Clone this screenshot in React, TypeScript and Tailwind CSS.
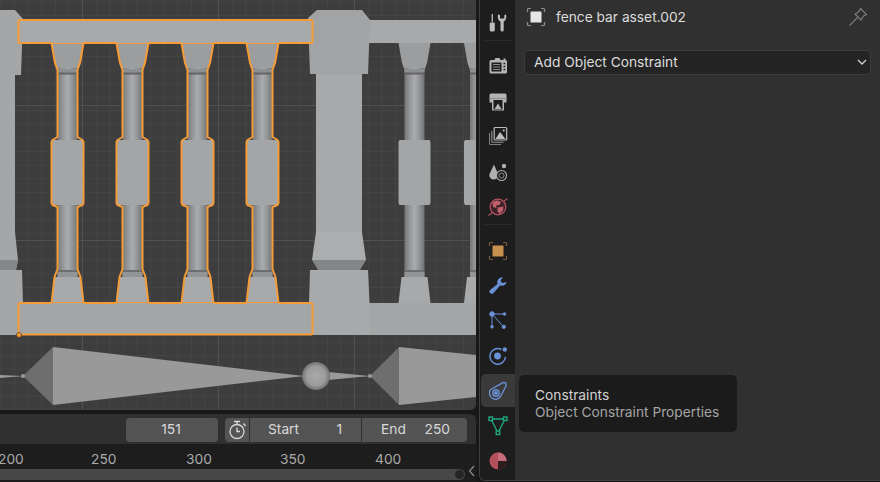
import type { ReactNode } from "react";

const FONT = "font-['Inter','Liberation_Sans',sans-serif]";
const ORANGE = "#f59b38";

function Baluster({ cx, selected }: { cx: number; selected: boolean }) {
  const outline = `M${cx - 16} 43 L${cx - 12.5} 63 L${cx - 10} 70 L${cx - 10} 137 L${cx - 15} 140 L${cx - 16} 142 L${cx - 16} 203 L${cx - 15} 205 L${cx - 10} 207 L${cx - 10} 269 L${cx - 13} 277 L${cx - 16} 303 L${cx + 16} 303 L${cx + 13} 277 L${cx + 10} 269 L${cx + 10} 207 L${cx + 15} 205 L${cx + 16} 203 L${cx + 16} 142 L${cx + 15} 140 L${cx + 10} 137 L${cx + 10} 70 L${cx + 12.5} 63 L${cx + 16} 43 Z`;
  return (
    <g>
      <path d={`M${cx - 16} 43 L${cx - 12.5} 63 L${cx - 10} 70 L${cx + 10} 70 L${cx + 12.5} 63 L${cx + 16} 43 Z`} fill="#9c9d9e" />
      <rect x={cx - 10} y="68" width="20" height="210" fill="url(#column)" />
      <rect x={cx - 10} y="69" width="20" height="3.5" fill="#8e8f90" />
      <rect x={cx - 10} y="72.5" width="20" height="2" fill="#626364" />
      <rect x={cx - 10} y="270" width="20" height="2" fill="#6c6d6e" />
      <rect x={cx - 10} y="272" width="20" height="5" fill="#939495" />
      <path d={`M${cx - 15} 140 L${cx - 16} 142 L${cx - 16} 203 L${cx - 15} 205 L${cx + 15} 205 L${cx + 16} 203 L${cx + 16} 142 L${cx + 15} 140 Z`} fill="#a4a5a6" />
      <path d={`M${cx - 13} 277 L${cx - 16} 303 L${cx + 16} 303 L${cx + 13} 277 Z`} fill="#a8a9aa" />
      {selected && <path d={outline} fill="none" stroke={ORANGE} strokeWidth="2" strokeLinejoin="round" />}
    </g>
  );
}

function Viewport() {
  return (
    <svg viewBox="0 0 476 410" className="block h-[410px] w-[476px] rounded-br-md">
      <defs>
        <pattern id="minor" x="0.5" y="1.5" width="13.6" height="13.6" patternUnits="userSpaceOnUse">
          <path d="M13.6 0H0V13.6" fill="none" stroke="#4a4a4a" strokeWidth="1" />
        </pattern>
        <linearGradient id="column" x1="0" x2="1" y1="0" y2="0">
          <stop offset="0" stopColor="#767778" />
          <stop offset="0.25" stopColor="#949596" />
          <stop offset="0.5" stopColor="#aaabac" />
          <stop offset="0.75" stopColor="#929394" />
          <stop offset="1" stopColor="#6f7071" />
        </linearGradient>
        <radialGradient id="ball" cx="0.5" cy="0.5" r="0.5">
          <stop offset="0" stopColor="#aaaaaa" />
          <stop offset="0.7" stopColor="#9a9a9a" />
          <stop offset="1" stopColor="#707070" />
        </radialGradient>
      </defs>
      <rect width="476" height="410" fill="#3d3d3d" />
      <rect width="476" height="410" fill="url(#minor)" />
      <path d="M82.5 0V410M218.5 0V410M354.5 0V410M0 105.5H476M0 240.5H476M0 376.5H476" stroke="#515151" strokeWidth="1" />

      {/* left post */}
      <path d="M0 10H15L23 19L21 75H15V232L18 260L16 270H22L24 335H0Z" fill="#a5a6a7" />
      <path d="M0 260H18L16 270H0Z" fill="#858687" />

      {/* right rail and balusters behind */}
      <rect x="366" y="20" width="110" height="23" fill="#a8a9aa" />
      <rect x="366" y="303" width="110" height="32" fill="#a4a5a6" />
      <Baluster cx={414.5} selected={false} />
      <Baluster cx={480} selected={false} />

      {/* right post */}
      <path d="M308 18L317 10H362L370 20L368 74H310Z" fill="#a2a3a4" />
      <rect x="316" y="74" width="46" height="158" fill="#a8a9aa" />
      <path d="M316 232H362L366 260H312Z" fill="#acadae" />
      <path d="M312 260H366L360 270H318Z" fill="#848586" />
      <path d="M310 270H368L371 335H308Z" fill="#a8a9aa" />

      {/* selected section */}
      <Baluster cx={67.5} selected />
      <Baluster cx={132.5} selected />
      <Baluster cx={197.5} selected />
      <Baluster cx={262.5} selected />
      <rect x="19" y="20" width="293" height="23" rx="2" fill="#a8a9aa" />
      <rect x="19" y="303" width="293" height="32" rx="2" fill="#a4a5a6" />
      <path d="M20 43A1.5 1.5 0 0 1 18.5 41.5V21.5A1.5 1.5 0 0 1 20 20H311A1.5 1.5 0 0 1 312.5 21.5V41.5A1.5 1.5 0 0 1 311 43H278.5M246.5 43H213.5M181.5 43H148.5M116.5 43H83.5M51.5 43H20" fill="none" stroke={ORANGE} strokeWidth="2" />
      <path d="M51.5 303H20A1.5 1.5 0 0 0 18.5 304.5V334.5H311A1.5 1.5 0 0 0 312.5 333V304.5A1.5 1.5 0 0 0 311 303H278.5M246.5 303H213.5M181.5 303H148.5M116.5 303H83.5" fill="none" stroke={ORANGE} strokeWidth="2" />
      <circle cx="19" cy="335" r="2.5" fill={ORANGE} stroke="#4a3320" strokeWidth="0.7" />

      {/* lower row */}
      <path d="M0 375L23 376L0 378Z" fill="#999" />
      <path d="M23 376L53 347V405Z" fill="#6e6e6e" />
      <path d="M53 347L304 376L53 405Z" fill="#999" />
      <path d="M328 372L370 376L328 380Z" fill="#999" />
      <circle cx="316" cy="376" r="14" fill="url(#ball)" />
      <path d="M370 376L399 347V405Z" fill="#6e6e6e" />
      <path d="M399 347L476 355V397L399 405Z" fill="#999" />
      <circle cx="23" cy="376" r="2" fill="#9a9a9a" />
      <circle cx="370" cy="376" r="2" fill="#9a9a9a" />
    </svg>
  );
}

function Timeline() {
  return (
    <div className="flex h-[68px] w-[476px] flex-col overflow-hidden rounded-tr-md text-[13.75px]">
      <div className="flex h-[30px] items-center bg-[#303030] pl-[126px] pt-[1px]">
        <div className="flex h-[24px] w-[92px] items-center justify-center rounded-[4px] bg-[#545454] pr-[2px] text-[#d8d8d8]">151</div>
        <div className="ml-[7px] flex h-[24px] w-[25px] items-center justify-center rounded-l-[4px] border-r border-[#303030] bg-[#545454]">
          <svg viewBox="0 0 20 20" className="h-[20px] w-[20px]" fill="none" stroke="#d8d8d8" strokeWidth="1.3">
            <circle cx="10" cy="11.5" r="7" />
            <path d="M7 1.5H13M10 1.5V4.5M16.5 3.5L18.5 6M10 7.5V11.5H13" />
          </svg>
        </div>
        <div className="flex h-[24px] w-[112px] items-center justify-between border-r border-[#303030] bg-[#545454] pl-[18px] pr-[19px] text-[#d8d8d8]">
          <span>Start</span>
          <span>1</span>
        </div>
        <div className="flex h-[24px] w-[105px] items-center justify-between rounded-r-[4px] bg-[#545454] pl-[19px] pr-[17px] text-[#d8d8d8]">
          <span>End</span>
          <span>250</span>
        </div>
      </div>
      <div className="relative flex-1 bg-[#1d1d1d]">
        <div className="relative h-[25px] text-[#a9a9a9]">
          <span className="absolute left-[-2px] top-[5px]">200</span>
          <span className="absolute left-[91px] top-[5px]">250</span>
          <span className="absolute left-[186px] top-[5px]">300</span>
          <span className="absolute left-[280px] top-[5px]">350</span>
          <span className="absolute left-[375px] top-[5px]">400</span>
        </div>
        <div className="flex h-[11px] w-[465px] items-center justify-end rounded-r-full bg-[#474747] pr-[1px]">
          <div className="h-[9px] w-[9px] rounded-full bg-[#262626]" />
        </div>
        <svg viewBox="0 0 8 12" className="absolute left-[468px] top-[21px] h-[12px] w-[8px]" fill="none" stroke="#8a8a8a" strokeWidth="1.2">
          <path d="M6 1L1.5 6L6 11" />
        </svg>
      </div>
    </div>
  );
}

function ToolIcon() {
  return (
    <svg viewBox="0 0 20 20" className="h-[20px] w-[20px]" fill="#bdbdbd">
      <rect x="3.6" y="1" width="1.3" height="8" />
      <path d="M1.7 10.5A1 1 0 0 1 2.7 9.5H5.8A1 1 0 0 1 6.8 10.5V17A1.5 1.5 0 0 1 5.3 18.5H3.2A1.5 1.5 0 0 1 1.7 17Z" />
      <path d="M10 1.2C9.3 4.5 10 7.5 12.5 8.5V17A1.6 1.6 0 0 0 15.7 17V8.5C18 7.5 18.8 4.5 18 1.2L16.3 2.2V5.5H12V2.2Z" />
    </svg>
  );
}

function RenderIcon() {
  return (
    <svg viewBox="0 0 20 20" className="h-[20px] w-[20px]">
      <path d="M3 4H6.5L7.5 2H11.5L12.5 4H15.5V2.5H17.5V4A1.5 1.5 0 0 1 19 5.5V16A1.5 1.5 0 0 1 17.5 17.5H3A1.5 1.5 0 0 1 1.5 16V5.5A1.5 1.5 0 0 1 3 4Z" fill="#b4b4b4" />
      <rect x="3.5" y="6.5" width="10" height="9" fill="#1d1d1d" />
      <path d="M5 8.5H12M5 11H12M5 13.5H12" stroke="#8f8f8f" strokeWidth="1.2" />
      <path d="M15.5 7.5H17.2M15.5 10.5H17.2M15.5 13.5H17.2" stroke="#1d1d1d" strokeWidth="1.6" />
    </svg>
  );
}

function OutputIcon() {
  return (
    <svg viewBox="0 0 20 20" className="h-[20px] w-[20px]">
      <path d="M1.5 3A1.5 1.5 0 0 1 3 1.5H17A1.5 1.5 0 0 1 18.5 3V10.5H16V18.5H4V10.5H1.5Z" fill="#b4b4b4" />
      <rect x="1.5" y="6" width="17" height="1" fill="#8d8d8d" />
      <rect x="5.5" y="8" width="9" height="9.5" fill="#1d1d1d" />
      <path d="M6.5 17L10 11.5L13.5 17Z" fill="#b4b4b4" />
    </svg>
  );
}

function ViewLayerIcon() {
  return (
    <svg viewBox="0 0 20 20" className="h-[20px] w-[20px]">
      <path d="M1.5 7V17.5A1 1 0 0 0 2.5 18.5H13" fill="none" stroke="#7d7d7d" strokeWidth="1.1" />
      <path d="M3.8 5V15.2A1 1 0 0 0 4.8 16.2H15.5" fill="none" stroke="#999" strokeWidth="1.1" />
      <rect x="6.2" y="1.5" width="12.5" height="12.5" rx="1" fill="#1d1d1d" stroke="#bdbdbd" strokeWidth="1.2" />
      <path d="M7.5 13L12 6L17.5 13Z" fill="#bdbdbd" />
      <circle cx="15.8" cy="4.5" r="1.1" fill="#bdbdbd" />
    </svg>
  );
}

function SceneIcon() {
  return (
    <svg viewBox="0 0 20 20" className="h-[20px] w-[20px]">
      <path d="M6 2.5L10 12A4.4 4.4 0 0 1 6 17.5A4.4 4.4 0 0 1 1.5 12Z" fill="#b0b0b0" />
      <circle cx="16" cy="4" r="2.2" fill="#b0b0b0" />
      <circle cx="13.5" cy="13.5" r="5" fill="#1d1d1d" stroke="#b0b0b0" strokeWidth="1.1" />
      <circle cx="13.5" cy="13.5" r="2.5" fill="none" stroke="#8a8a8a" strokeWidth="1" />
    </svg>
  );
}

function WorldIcon() {
  return (
    <svg viewBox="0 0 20 20" className="h-[20px] w-[20px]">
      <circle cx="10" cy="10" r="7.8" fill="#3a2227" stroke="#b1515e" strokeWidth="1.3" />
      <path d="M4.5 5.5L9 3.2L13 5L11.5 8L8 8.5L8.5 11L5 10Z M9.5 10.5L15.5 9.5L15 13.5L11.5 17L9.5 14Z" fill="#c2616e" />
      <path d="M0.5 18.5L4.5 15.5M15.5 4.5L19.5 1.5" stroke="#b1515e" strokeWidth="1.2" />
    </svg>
  );
}

function ObjectIcon() {
  return (
    <svg viewBox="0 0 20 20" className="h-[20px] w-[20px]">
      <path d="M1.5 5V2.5A1 1 0 0 1 2.5 1.5H5M15 1.5H17.5A1 1 0 0 1 18.5 2.5V5M18.5 15V17.5A1 1 0 0 1 17.5 18.5H15M5 18.5H2.5A1 1 0 0 1 1.5 17.5V15" fill="none" stroke="#7a5a3e" strokeWidth="1.2" />
      <rect x="4.5" y="4.5" width="11" height="11" rx="0.5" fill="#c9914f" />
    </svg>
  );
}

function ModifierIcon() {
  return (
    <svg viewBox="0 0 20 20" className="h-[20px] w-[20px]">
      <path d="M18.5 5.5C18.5 9 15 10.5 12 9.5L6 16.5C4.5 19 0.5 17.5 1.5 14.5L9.5 8C8.5 4.5 11 1 15 1.3L12.5 4.5L14 7L17 6.5Z" fill="#6a90d6" />
    </svg>
  );
}

function ParticleIcon() {
  return (
    <svg viewBox="0 0 20 20" className="h-[20px] w-[20px]" fill="#6a90d6" stroke="#6a90d6">
      <path d="M4 3V15M4 3H16M4 3L14 14" strokeWidth="1" />
      <circle cx="4" cy="3" r="2.3" />
      <circle cx="16.5" cy="3" r="1.3" />
      <circle cx="4" cy="15.8" r="1.3" />
      <circle cx="15.8" cy="15.8" r="1.7" />
    </svg>
  );
}

function PhysicsIcon() {
  return (
    <svg viewBox="0 0 20 20" className="h-[20px] w-[20px]">
      <path d="M13.5 3.5A7.8 7.8 0 1 0 17.5 11" fill="none" stroke="#6a90d6" strokeWidth="1.5" />
      <circle cx="9.5" cy="10" r="3.4" fill="#6a90d6" />
      <circle cx="16.8" cy="3.5" r="2.2" fill="#6a90d6" />
    </svg>
  );
}

function ConstraintIcon() {
  return (
    <svg viewBox="0 0 20 20" className="h-[20px] w-[20px]" fill="none" stroke="#6a90d6" strokeWidth="1.4">
      <path d="M2.7 8.5L14.5 1.8C16.8 0.6 19 2.7 18 5L12.5 15.5C10.7 18.3 7.5 19 5 17.7C1.3 16 0.3 11 2.7 8.5Z" />
      <circle cx="8" cy="12" r="3.2" />
      <circle cx="8" cy="12" r="1.2" fill="#6a90d6" />
    </svg>
  );
}

function DataIcon() {
  return (
    <svg viewBox="0 0 20 20" className="h-[20px] w-[20px]" fill="#1d1d1d" stroke="#1fa77f" strokeWidth="1.4">
      <path d="M3 3H17L10 17Z" fill="none" />
      <rect x="1" y="1" width="3.5" height="3.5" />
      <rect x="15.5" y="1" width="3.5" height="3.5" />
      <rect x="8.2" y="15" width="3.5" height="3.5" />
    </svg>
  );
}

function MaterialIcon() {
  return (
    <svg viewBox="0 0 20 20" className="h-[20px] w-[20px]">
      <circle cx="10" cy="10" r="8.5" fill="#b3505c" />
      <path d="M10 1.5A8.5 8.5 0 0 1 18.5 10H10Z" fill="#c56d78" />
      <path d="M10 10H18.5A8.5 8.5 0 0 1 10 18.5Z" fill="#2b1c1e" />
    </svg>
  );
}

function Tab({ children, className }: { children: ReactNode; className: string }) {
  return <div className={`flex w-full items-center justify-center ${className}`}>{children}</div>;
}

function Tabs() {
  return (
    <div className="flex h-full w-[35px] shrink-0 flex-col bg-[#1d1d1d] pl-[1px]">
      <Tab className="mt-[13px] h-[20px]"><ToolIcon /></Tab>
      <div className="mx-[3px] mt-[7px] h-px bg-[#2a2a2a]" />
      <Tab className="mt-[15px] h-[20px]"><RenderIcon /></Tab>
      <Tab className="mt-[16px] h-[20px]"><OutputIcon /></Tab>
      <Tab className="mt-[14px] h-[20px]"><ViewLayerIcon /></Tab>
      <Tab className="mt-[16px] h-[20px]"><SceneIcon /></Tab>
      <Tab className="mt-[15px] h-[20px]"><WorldIcon /></Tab>
      <div className="mx-[3px] mt-[7px] h-px bg-[#2a2a2a]" />
      <Tab className="mt-[16px] h-[20px]"><ObjectIcon /></Tab>
      <Tab className="mt-[15px] h-[20px]"><ModifierIcon /></Tab>
      <Tab className="mt-[15px] h-[20px]"><ParticleIcon /></Tab>
      <Tab className="mt-[15px] h-[20px]"><PhysicsIcon /></Tab>
      <Tab className="mt-[8px] h-[33px] rounded-l-[5px] bg-[#3a3a3a]"><ConstraintIcon /></Tab>
      <Tab className="mt-[9px] h-[20px]"><DataIcon /></Tab>
      <Tab className="mt-[15px] h-[20px]"><MaterialIcon /></Tab>
    </div>
  );
}

function Properties() {
  return (
    <div className="relative min-w-0 flex-1 bg-[#303030] pl-[9px] pr-[9px] pt-[6px]">
      <div className="flex h-[21px] items-center pl-[2px] pr-[3px]">
        <svg viewBox="0 0 20 20" className="h-[20px] w-[20px]">
          <path d="M1.5 5V2.5A1 1 0 0 1 2.5 1.5H5M15 1.5H17.5A1 1 0 0 1 18.5 2.5V5M18.5 15V17.5A1 1 0 0 1 17.5 18.5H15M5 18.5H2.5A1 1 0 0 1 1.5 17.5V15" fill="none" stroke="#8e8e8e" strokeWidth="1.2" />
          <rect x="4.5" y="4.5" width="11" height="11" rx="0.5" fill="#e6e6e6" />
        </svg>
        <span className="ml-[10px] flex-1 pt-[2px] text-[13.75px] text-[#dcdcdc]">fence bar asset.002</span>
        <svg viewBox="0 0 20 20" className="h-[20px] w-[20px]" fill="none" stroke="#7d7d7d" strokeWidth="1.1">
          <path d="M12.5 1.5L18.5 7.5L15.5 9L13 13L7 7L11 4.5Z" />
          <path d="M9.5 10.5L1.5 18.5" />
        </svg>
      </div>
      <div className="mt-[23px] flex h-[25px] items-center justify-between rounded-[4px] border border-[#3c3c3c] bg-[#242424] pb-[1px] pl-[9px] pr-[3px] text-[13.75px] text-[#dcdcdc]">
        <span>Add Object Constraint</span>
        <svg viewBox="0 0 10 6" className="h-[6px] w-[10px]" fill="none" stroke="#d0d0d0" strokeWidth="1.3">
          <path d="M1 1L5 5L9 1" />
        </svg>
      </div>
      <div className="absolute left-[4px] top-[375px] flex h-[57px] w-[218px] flex-col justify-center rounded-[5px] bg-[#1b1b1b] pl-[16px] text-[13.75px] leading-[17px]">
        <span className="text-[#d2d2d2]">Constraints</span>
        <span className="text-[#a3a3a3]">Object Constraint Properties</span>
      </div>
    </div>
  );
}

export default function App() {
  return (
    <div className={`flex h-[482px] w-[880px] overflow-hidden bg-[#181818] ${FONT}`}>
      <div className="flex w-[476px] shrink-0 flex-col gap-[4px]">
        <Viewport />
        <Timeline />
      </div>
      <div className="ml-[3px] flex h-[481px] flex-1 overflow-hidden rounded-bl-[6px] border-l border-b border-[#3f3f3f]">
        <Tabs />
        <Properties />
      </div>
    </div>
  );
}
